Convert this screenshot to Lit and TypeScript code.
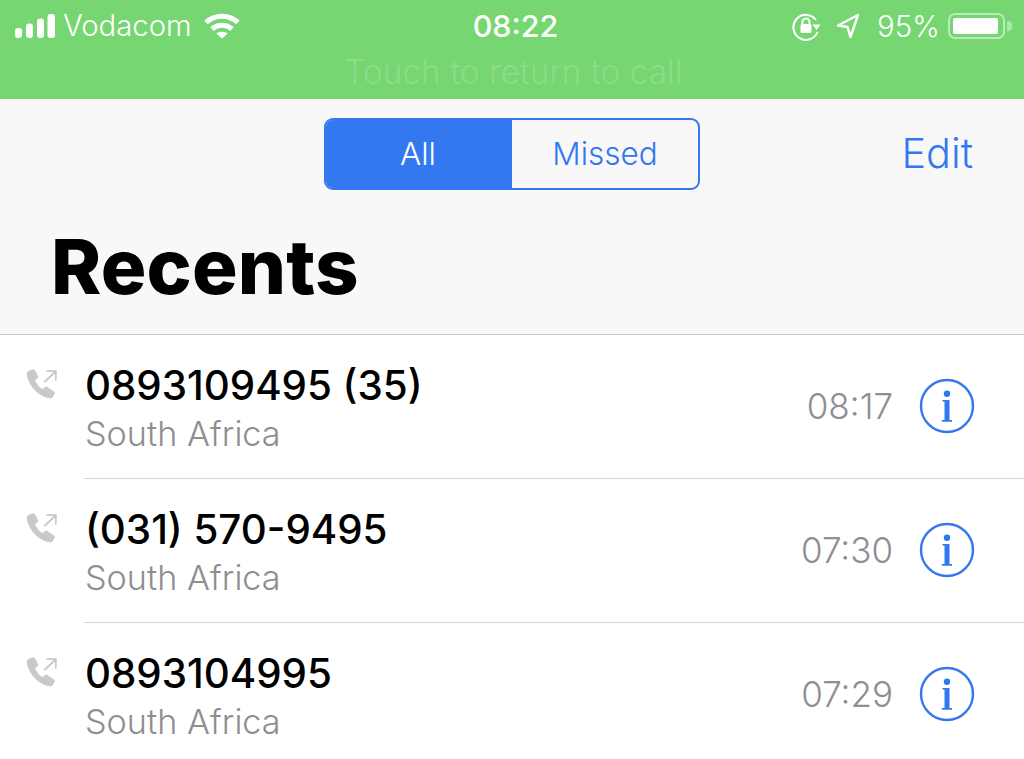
import { LitElement, html, css, svg } from 'lit';
import { customElement } from 'lit/decorators.js';

const CALLS = [
  { name: '0893109495 (35)', place: 'South Africa', time: '08:17' },
  { name: '(031) 570-9495', place: 'South Africa', time: '07:30' },
  { name: '0893104995', place: 'South Africa', time: '07:29' }
];

const signal = svg`<svg width="40" height="24" viewBox="0 0 40 24" fill="#fff">
  <rect x="0" y="14" width="7" height="10" rx="3"/>
  <rect x="11" y="9.500" width="7" height="14.500" rx="3"/>
  <rect x="22" y="4.500" width="7" height="19.500" rx="3"/>
  <rect x="32.500" y="0" width="7.500" height="24" rx="3"/>
</svg>`;

const wifi = svg`<svg width="36" height="26" viewBox="0 0 36 26" fill="none" stroke="#fff" stroke-width="5">
  <path d="M2 9.500C11 1.200 25 1.200 34 9.500"/>
  <path d="M8 16C13.800 11 22.200 11 28 16"/>
  <path d="M18 25.500L12.200 20.500C15.400 18 20.600 18 23.800 20.500Z" fill="#fff" stroke="none"/>
</svg>`;

const lock = svg`<svg width="30" height="30" viewBox="0 0 30 30" fill="none" stroke="#fff" stroke-width="2">
  <path d="M24 9A12.500 12.500 0 1 0 25.500 21"/>
  <path d="M20.500 13.500h8l-4 5.500z" fill="#fff" stroke="none"/>
  <rect x="8.500" y="13" width="11" height="9" rx="1.500" fill="#fff" stroke="none"/>
  <path d="M10.500 13.500V11a3.500 3.500 0 0 1 7 0V13.500"/>
</svg>`;

const arrow = svg`<svg width="24" height="26" viewBox="0 0 24 26" fill="none" stroke="#fff" stroke-width="2.400" stroke-linejoin="round">
  <path d="M22 2L2 12.500L11.500 14L14.500 24Z"/>
</svg>`;

const phone = svg`<svg width="32" height="32" viewBox="0 0 32 32">
  <path fill="#c9c9cb" d="M3.500 1.500L7 .4c1-.3 1.700.1 2.100 1L12 7.200c.3.8.1 1.400-.5 1.900L9 11.200c1.500 3.600 3.800 6.400 7.200 8.700l3.100-2c.7-.4 1.300-.4 2 .1l6.900 4.700c.8.600.9 1.300.5 2.100l-1.800 3c-.7 1.200-2 1.800-3.400 1.500C12.500 27.300 3 17.500.8 6.200.5 4 1.500 2.300 3.500 1.500Z"/>
  <path fill="none" stroke="#c9c9cb" stroke-width="1.800" d="M18.500 13L29.500 2.500M20.500 2.200h9.300v9.300"/>
</svg>`;

const info = svg`<svg width="56" height="56" viewBox="0 0 56 56" fill="none">
  <circle cx="28" cy="28" r="26" stroke="#3478f0" stroke-width="2.400"/>
  <circle cx="28" cy="15.700" r="3.200" fill="#3478f0"/>
  <path fill="#3478f0" d="M23.500 22h7v20h2.500v1.700H22.800V42h2.700V23.500h-2Z"/>
</svg>`;

@customElement('app-root')
export class AppRoot extends LitElement {
  static styles = css`
    :host {
      display: block;
      width: 1024px;
      height: 759px;
      overflow: hidden;
      background: #fff;
      font-family: Inter, "Liberation Sans", sans-serif;
    }
    .call-banner {
      height: 99px;
      box-sizing: border-box;
      background: #76d672;
      color: #fff;
      padding: 7px 12px 0 15px;
    }
    .status {
      display: grid;
      grid-template-columns: 1fr auto 1fr;
      align-items: center;
      height: 34px;
    }
    .status-left, .status-right {
      display: flex;
      align-items: center;
    }
    .status-right {
      justify-content: flex-end;
    }
    .carrier {
      font-size: 29.300px;
      font-weight: 300;
      margin: 0 12px 0 8px;
    }
    .clock {
      font-size: 30.500px;
      font-weight: 500;
      margin-left: 4px;
    }
    .percent {
      font-size: 29.500px;
      font-weight: 300;
      margin: 0 8px 0 17px;
    }
    .arrow {
      display: flex;
      margin-left: 14px;
    }
    .battery {
      display: flex;
      align-items: center;
      gap: 2px;
    }
    .battery-body {
      width: 57px;
      height: 26px;
      box-sizing: border-box;
      border: 2px solid #ffffff80;
      border-radius: 7px;
      padding: 3px;
    }
    .battery-fill {
      width: 95%;
      height: 100%;
      background: #fff;
      border-radius: 2px;
    }
    .battery-tip {
      width: 5px;
      height: 10px;
      background: #ffffff66;
      border-radius: 0 4px 4px 0;
    }
    .touch {
      text-align: center;
      font-size: 33.400px;
      font-weight: 300;
      color: #ffffff2e;
      margin-top: 13px;
      line-height: 36px;
    }
    .header {
      height: 236px;
      box-sizing: border-box;
      background: #f8f8f8;
      border-bottom: 1px solid #c9c9cb;
      padding: 19px 51px 0;
    }
    .nav {
      display: grid;
      grid-template-columns: 1fr auto 1fr;
      align-items: center;
    }
    .tabs {
      display: flex;
      width: 376px;
      height: 72px;
      box-sizing: border-box;
      border: 2.500px solid #3478f0;
      border-radius: 9px;
      overflow: hidden;
      font-size: 31.500px;
    }
    .tab {
      flex: 0 0 50%;
      box-sizing: border-box;
      display: flex;
      align-items: center;
      justify-content: center;
      color: #3478f0;
      font-weight: 350;
      padding-bottom: 2px;
    }
    .tab.on {
      background: #3478f0;
      color: #fff;
      font-weight: 300;
      padding-right: 2px;
    }
    .edit {
      justify-self: end;
      font-size: 41.400px;
      color: #3478f0;
      font-weight: 300;
      margin-bottom: 2px;
    }
    h1 {
      margin: 34px 0 0;
      font-size: 76px;
      line-height: 84px;
      font-weight: 800;
      color: #000;
      letter-spacing: 0.2px;
    }
    .row {
      display: flex;
      height: 143px;
      box-sizing: border-box;
      padding: 31px 49px 0 26px;
    }
    .phone {
      width: 59px;
      flex: none;
      margin-top: 3px;
    }
    .body {
      flex: 1;
      margin-top: 1px;
    }
    .name {
      font-size: 40.300px;
      line-height: 38px;
      font-weight: 500;
      color: #000;
    }
    .place {
      font-size: 34.200px;
      line-height: 40px;
      margin-top: 9px;
      color: #8e8e93;
      font-weight: 300;
    }
    .time {
      font-size: 35px;
      font-weight: 300;
      color: #8e8e93;
      margin: 10px 26px 0 0;
      line-height: 60px;
      height: 60px;
    }
    .info {
      display: flex;
      margin-top: 12px;
      height: 56px;
    }
    .sep {
      height: 1px;
      background: #d3d3d8;
      margin-left: 84px;
    }
  `;

  render() {
    return html`
      <div class="call-banner">
        <div class="status">
          <div class="status-left">
            ${signal}
            <span class="carrier">Vodacom</span>
            ${wifi}
          </div>
          <span class="clock">08:22</span>
          <div class="status-right">
            ${lock}
            <span class="arrow">${arrow}</span>
            <span class="percent">95%</span>
            <div class="battery">
              <div class="battery-body"><div class="battery-fill"></div></div>
              <div class="battery-tip"></div>
            </div>
          </div>
        </div>
        <div class="touch">Touch to return to call</div>
      </div>
      <div class="header">
        <div class="nav">
          <span></span>
          <div class="tabs">
            <div class="tab on">All</div>
            <div class="tab">Missed</div>
          </div>
          <span class="edit">Edit</span>
        </div>
        <h1>Recents</h1>
      </div>
      ${CALLS.map((c, i) => html`
        ${i > 0 ? html`<div class="sep"></div>` : ''}
        <div class="row">
          <div class="phone">${phone}</div>
          <div class="body">
            <div class="name">${c.name}</div>
            <div class="place">${c.place}</div>
          </div>
          <div class="time">${c.time}</div>
          <div class="info">${info}</div>
        </div>
      `)}
    `;
  }
}
